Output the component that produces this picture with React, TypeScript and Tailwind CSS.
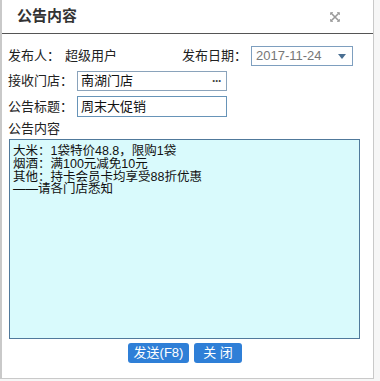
import { ReactNode } from "react";

const FONT = { fontFamily: '"Liberation Sans", "Noto Sans CJK SC", sans-serif' };

function Label({ children, w }: { children: ReactNode; w: string }) {
  return <span className={`${w} shrink-0 text-[13px] leading-[20px] text-[#222]`}>{children}</span>;
}

function CloseIcon() {
  return (
    <svg width="10" height="10" viewBox="0 0 10 10" className="text-[#9a9a9a]">
      <path d="M1 1 L9 9 M9 1 L1 9" stroke="currentColor" strokeWidth="1.6" />
      <path d="M0.5 3 V0.5 H3 M7 0.5 H9.5 V3 M9.5 7 V9.5 H7 M3 9.5 H0.5 V7" stroke="currentColor" strokeWidth="0.8" fill="none" />
    </svg>
  );
}

export default function App() {
  const lines = [
    "大米：1袋特价48.8，限购1袋",
    "烟酒：满100元减免10元",
    "其他：持卡会员卡均享受88折优惠",
    "——请各门店悉知",
  ];

  return (
    <div className="h-[381px] w-[380px] bg-[#f6f6f6]" style={FONT}>
      <div className="flex h-[379px] w-[374px] flex-col border-b border-l-2 border-r border-[#c9c9c9] bg-white">
        {/* title bar */}
        <div className="flex h-[34px] shrink-0 items-center justify-between border-b border-[#555] pl-[15px] pr-[33px]">
          <span className="text-[15px] font-bold text-[#333]">公告内容</span>
          <CloseIcon />
        </div>

        <div className="flex flex-col px-[6px]">
          <div className="mt-[12px] flex h-[20px] items-center">
            <Label w="w-[57px]">发布人：</Label>
            <Label w="w-[117px]">超级用户</Label>
            <Label w="w-[69px]">发布日期：</Label>
            <div className="flex h-[20px] w-[102px] items-center justify-between border border-[#7e9fbf] pl-[4px] pr-[6px]">
              <span className="text-[13px] text-[#777]">2017-11-24</span>
              <svg width="8" height="5" viewBox="0 0 8 5">
                <path d="M0 0 H8 L4 5 Z" fill="#4a6f92" />
              </svg>
            </div>
          </div>

          <div className="mt-[5px] flex h-[20px] items-center">
            <Label w="w-[69px]">接收门店：</Label>
            <div className="flex h-[20px] w-[150px] items-center justify-between border border-[#8aa3bb] pl-[3px] pr-[5px]">
              <span className="text-[13px] text-[#111]">南湖门店</span>
              <span className="text-[12px] font-bold leading-none tracking-[-1px] text-[#444]">···</span>
            </div>
          </div>

          <div className="mt-[5px] flex h-[21px] items-center">
            <Label w="w-[69px]">公告标题：</Label>
            <div className="flex h-[21px] w-[150px] items-center border border-[#6794b8] pl-[3px]">
              <span className="text-[13px] text-[#111]">周末大促销</span>
            </div>
          </div>

          <span className="mt-[2px] text-[13px] leading-[20px] text-[#222]">公告内容</span>

          <div className="ml-[1px] h-[200px] w-[351px] border border-[#50799b] bg-[#d9fafc] px-[3px] pt-[5px]">
            {lines.map((l) => (
              <div key={l} className="text-[12.5px] leading-[12.8px] text-[#111]">
                {l}
              </div>
            ))}
          </div>

          <div className="mt-[4px] flex gap-[5px] pl-[120px]">
            <button className="h-[20px] w-[61px] rounded-[3px] bg-[#2f7fd7] text-[13px] leading-[20px] text-white">
              发送(F8)
            </button>
            <button className="h-[20px] w-[48px] rounded-[3px] bg-[#2f7fd7] text-[13px] leading-[20px] text-white">
              关 闭
            </button>
          </div>
        </div>
      </div>
    </div>
  );
}
